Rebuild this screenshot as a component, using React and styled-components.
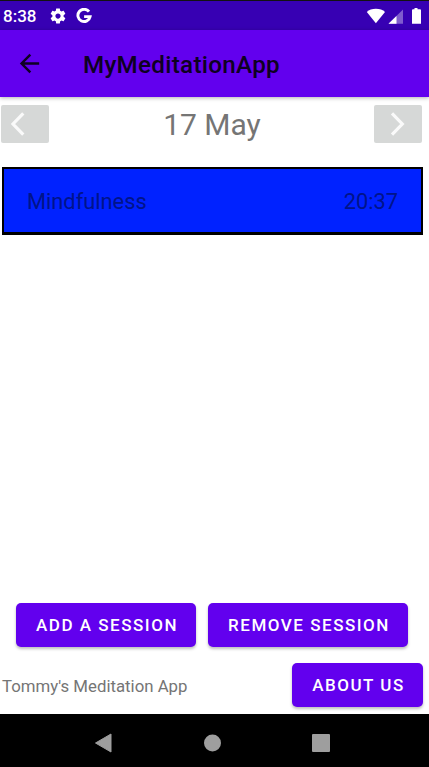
import React from 'react';
import styled, { createGlobalStyle } from 'styled-components';

const GlobalStyle = createGlobalStyle`
  * { box-sizing: border-box; }
  body { margin: 0; background: #fff; font-family: Roboto, sans-serif; }
  svg { display: block; flex: none; }
`;

const Screen = styled.div`
  width: 429px;
  height: 767px;
  display: flex;
  flex-direction: column;
  background: #fff;
  overflow: hidden;
`;

const StatusBar = styled.div`
  height: 30px;
  flex: none;
  display: flex;
  align-items: center;
  justify-content: space-between;
  padding: 0 7px 0 3px;
  border-top: 1px solid #121212;
  background: #3700b3;
  color: #fff;
`;

const StatusGroup = styled.div`
  display: flex;
  align-items: center;
`;

const Clock = styled.span`
  width: 46px;
  font-size: 17px;
  font-weight: 500;
  line-height: 28px;
  padding-top: 1px;
`;

const AppBar = styled.header`
  height: 67px;
  flex: none;
  display: flex;
  align-items: center;
  padding-left: 15px;
  background: #6200ee;
  box-shadow: 0 1px 4px rgba(0, 0, 0, 0.3);
`;

const BackButton = styled.button`
  width: 68px;
  padding: 0;
  border: 0;
  background: none;
`;

const Title = styled.h1`
  margin: 2px 0 0;
  font-size: 24.2px;
  font-weight: 500;
  letter-spacing: 0.3px;
  line-height: 32px;
  color: #0e0122;
`;

const DateRow = styled.div`
  display: flex;
  align-items: center;
  justify-content: space-between;
  margin: 8px 7px 0 1px;
  height: 38px;
`;

const ArrowButton = styled.button`
  width: 48px;
  height: 38px;
  padding: 0 0 0 ${(p) => p.$inset}px;
  border: 0;
  border-radius: 2px;
  background: #d6d8d7;
`;

const DateLabel = styled.span`
  font-size: 30px;
  line-height: 38px;
  color: #757575;
  padding: 2px 0 0 1px;
`;

const SessionCard = styled.div`
  display: flex;
  align-items: center;
  justify-content: space-between;
  width: 421px;
  height: 68px;
  margin: 24px 0 0 2px;
  padding: 2px 23px 0;
  border: solid #000;
  border-width: 2px 2px 3px;
  background: #0022ff;
  font-size: 21.8px;
  color: #001489;
`;

const Actions = styled.div`
  display: flex;
  gap: 12px;
  margin: auto 0 0 16px;
`;

const ActionButton = styled.button`
  width: ${(p) => p.$width}px;
  height: 44px;
  padding: 0 0 1px 2px;
  border: 0;
  border-radius: 5px;
  background: #6200ee;
  box-shadow: 0 2px 3px rgba(0, 0, 0, 0.26);
  color: #fff;
  font: 500 17px Roboto, sans-serif;
  letter-spacing: 1.52px;
  white-space: nowrap;
`;

const Footer = styled.footer`
  display: flex;
  align-items: center;
  justify-content: space-between;
  margin: 16px 6px 7px 2px;
  font-size: 16.8px;
  color: #757575;
`;

const Credit = styled.span`
  padding-top: 2px;
`;

const NavBar = styled.nav`
  height: 53px;
  flex: none;
  display: flex;
  align-items: center;
  padding: 5px 0 0 94px;
  background: #000;
`;

const NavItem = styled.span`
  width: 109px;
`;

const Gear = () => (
  <svg width="18" height="18" viewBox="0 0 24 24" fill="#fff">
    <path d="M19.43 12.98c.04-.32.07-.64.07-.98s-.03-.66-.07-.98l2.11-1.65c.19-.15.24-.42.12-.64l-2-3.46c-.12-.22-.39-.3-.61-.22l-2.49 1c-.52-.4-1.08-.73-1.69-.98l-.38-2.65C14.46 2.18 14.25 2 14 2h-4c-.25 0-.46.18-.49.42l-.38 2.65c-.61.25-1.17.59-1.69.98l-2.49-1c-.23-.09-.49 0-.61.22l-2 3.46c-.13.22-.07.49.12.64l2.11 1.65c-.04.32-.07.65-.07.98s.03.66.07.98l-2.11 1.65c-.19.15-.24.42-.12.64l2 3.46c.12.22.39.3.61.22l2.49-1c.52.4 1.08.73 1.69.98l.38 2.65c.03.24.24.42.49.42h4c.25 0 .46-.18.49-.42l.38-2.65c.61-.25 1.17-.59 1.69-.98l2.49 1c.23.09.49 0 .61-.22l2-3.46c.12-.22.07-.49-.12-.64l-2.11-1.65zM12 15.5c-1.93 0-3.5-1.57-3.5-3.5s1.57-3.5 3.5-3.5 3.5 1.57 3.5 3.5-1.57 3.5-3.5 3.5z" />
  </svg>
);

const GoogleMark = styled.svg`
  margin-left: 9px;
`;

const StatusIcons = () => (
  <svg width="56" height="18" viewBox="0 0 56 18">
    <path d="M0.8 5C4.8 0.7 15 0.7 19 5L9.9 16.2Z" fill="#fff" />
    <path d="M22.5 16.7 37 2.5V16.7Z" fill="#fff" opacity=".36" />
    <path d="M22.5 16.7 30.5 8.9V16.7Z" fill="#fff" />
    <path d="M46 3.2Q46 2.2 47 2.2H48.5V1H51.5V2.2H54Q55 2.2 55 3.2V16.7H46Z" fill="#fff" />
  </svg>
);

const Chevron = ({ points }) => (
  <svg width="16" height="26" viewBox="0 0 16 26" fill="none" stroke="#fafafa" strokeWidth="3.2">
    <polyline points={points} />
  </svg>
);

export default function App() {
  return (
    <Screen>
      <GlobalStyle />
      <StatusBar>
        <StatusGroup>
          <Clock>8:38</Clock>
          <Gear />
          <GoogleMark width="16" height="16" viewBox="0 0 16 16" fill="none" stroke="#fff" strokeWidth="2.9">
            <path d="M13 3.7A6.15 6.15 0 1 0 14.1 8.6H8.1" />
          </GoogleMark>
        </StatusGroup>
        <StatusIcons />
      </StatusBar>
      <AppBar>
        <BackButton aria-label="Back">
          <svg width="29" height="29" viewBox="0 0 24 24" fill="#0e0122">
            <path d="M20 11H7.83l5.59-5.59L12 4l-8 8 8 8 1.41-1.41L7.83 13H20v-2z" />
          </svg>
        </BackButton>
        <Title>MyMeditationApp</Title>
      </AppBar>
      <DateRow>
        <ArrowButton $inset={9} aria-label="Previous day">
          <Chevron points="13.3,2.3 3,13 13.3,23.7" />
        </ArrowButton>
        <DateLabel>17 May</DateLabel>
        <ArrowButton $inset={16} aria-label="Next day">
          <Chevron points="2,2.3 12.3,13 2,23.7" />
        </ArrowButton>
      </DateRow>
      <SessionCard>
        <span>Mindfulness</span>
        <span>20:37</span>
      </SessionCard>
      <Actions>
        <ActionButton $width={180}>ADD A SESSION</ActionButton>
        <ActionButton $width={200}>REMOVE SESSION</ActionButton>
      </Actions>
      <Footer>
        <Credit>Tommy's Meditation App</Credit>
        <ActionButton $width={131}>ABOUT US</ActionButton>
      </Footer>
      <NavBar>
        <NavItem>
          <svg width="18" height="20" viewBox="0 0 18 20">
            <path d="M1.5 10 17 1V19Z" fill="#9e9e9e" stroke="#9e9e9e" strokeLinejoin="round" />
          </svg>
        </NavItem>
        <NavItem>
          <svg width="19" height="18" viewBox="0 0 19 18">
            <circle cx="9.5" cy="9" r="8.5" fill="#9e9e9e" />
          </svg>
        </NavItem>
        <NavItem>
          <svg width="18" height="18" viewBox="0 0 18 18">
            <rect width="18" height="18" rx="1" fill="#9e9e9e" />
          </svg>
        </NavItem>
      </NavBar>
    </Screen>
  );
}
